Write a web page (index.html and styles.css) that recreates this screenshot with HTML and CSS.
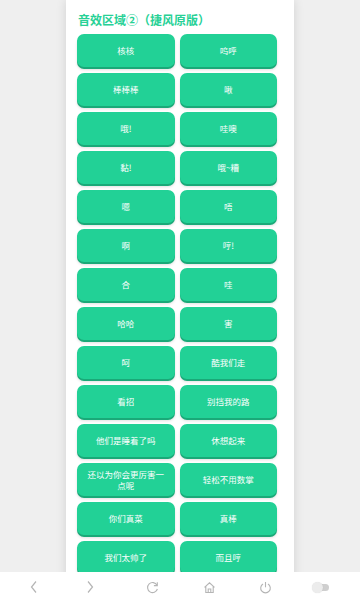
FILE: index.html
```html
<!DOCTYPE html>
<html lang="zh">
<head>
<meta charset="utf-8">
<link rel="stylesheet" href="styles.css">
</head>
<body>
<div class="page">
  <div class="card">
    <h2 class="title">音效区域②（捷风原版）</h2>
    <div class="grid">
      <div class="btn">核核</div><div class="btn">呜呼</div>
      <div class="btn">棒棒棒</div><div class="btn">啾</div>
      <div class="btn">哦!</div><div class="btn">哇噢</div>
      <div class="btn">黏!</div><div class="btn">哦~糟</div>
      <div class="btn">嗯</div><div class="btn">唔</div>
      <div class="btn">啊</div><div class="btn">哼!</div>
      <div class="btn">合</div><div class="btn">哇</div>
      <div class="btn">哈哈</div><div class="btn">害</div>
      <div class="btn">呵</div><div class="btn">酷我们走</div>
      <div class="btn">看招</div><div class="btn">别挡我的路</div>
      <div class="btn">他们是睡着了吗</div><div class="btn">休想起来</div>
      <div class="btn">还以为你会更厉害一点呢</div><div class="btn">轻松不用数掌</div>
      <div class="btn">你们真菜</div><div class="btn">真棒</div>
      <div class="btn">我们太帅了</div><div class="btn">而且哼</div>
    </div>
  </div>
</div>
<nav class="navbar">
  <div class="nav-item nav-back"><svg width="10" height="14" viewBox="0 0 10 14"><path d="M7 1.5 L2.5 7 L7 12.5" fill="none" stroke="#b5b5b5" stroke-width="1.2"/></svg></div>
  <div class="nav-item nav-fwd"><svg width="10" height="14" viewBox="0 0 10 14"><path d="M3 1.5 L7.5 7 L3 12.5" fill="none" stroke="#b5b5b5" stroke-width="1.2"/></svg></div>
  <div class="nav-item"><svg width="13" height="13" viewBox="0 0 13 13"><path d="M11 4.2 A5 5 0 1 0 11.4 8" fill="none" stroke="#b5b5b5" stroke-width="1.1"/><path d="M11.3 1.2 L11.3 4.6 L7.9 4.6" fill="none" stroke="#b5b5b5" stroke-width="1.1"/></svg></div>
  <div class="nav-item"><svg width="13" height="13" viewBox="0 0 13 13"><path d="M1.5 6.3 L6.5 1.8 L11.5 6.3 M2.8 5.3 V11.5 H10.2 V5.3 M5.2 11.5 V8 H7.8 V11.5" fill="none" stroke="#b5b5b5" stroke-width="1.1"/></svg></div>
  <div class="nav-item"><svg width="13" height="13" viewBox="0 0 13 13"><path d="M4 3 A4.8 4.8 0 1 0 9 3" fill="none" stroke="#b5b5b5" stroke-width="1.1"/><path d="M6.5 1 V6.3" fill="none" stroke="#b5b5b5" stroke-width="1.1"/></svg></div>
  <div class="nav-item nav-toggle"><span class="toggle"><span class="knob"></span></span></div>
</nav>
</body>
</html>
```
FILE: styles.css
```css
html, body {
  margin: 0;
  padding: 0;
  width: 360px;
  height: 600px;
  overflow: hidden;
  background: #efefef;
  font-family: "Noto Sans CJK SC", "Noto Sans", sans-serif;
}
.page {
  display: flex;
  justify-content: center;
  height: 600px;
  overflow: hidden;
}
.card {
  width: 228px;
  height: 600px;
  background: #ffffff;
  box-shadow: 0 0 10px rgba(0, 0, 0, 0.12);
  padding: 10px 17px 0 11px;
  box-sizing: border-box;
  overflow: hidden;
}
.title {
  margin: 0 0 5px 1px;
  font-size: 12px;
  line-height: 19px;
  font-weight: 700;
  color: #27d196;
}
.grid {
  display: grid;
  grid-template-columns: 97.5px 97.5px;
  column-gap: 5px;
  row-gap: 6px;
}
.btn {
  height: 33px;
  border-radius: 7px;
  background: #22d196;
  box-shadow: 0 2px 0 #1aa978, 0 3px 3px rgba(0, 0, 0, 0.12);
  color: #ffffff;
  font-size: 8.5px;
  line-height: 11px;
  display: flex;
  align-items: center;
  justify-content: center;
  text-align: center;
  padding: 0 8px;
  box-sizing: border-box;
}
.navbar {
  position: fixed;
  left: 0;
  right: 0;
  bottom: 0;
  height: 28px;
  background: #ffffff;
  display: flex;
  align-items: center;
}
.nav-item {
  flex: 1;
  display: flex;
  align-items: center;
  justify-content: center;
  padding-top: 2px;
}
.nav-back { padding-left: 6px; }
.nav-fwd { padding-right: 6px; }
.nav-toggle { padding-right: 10px; }
.toggle {
  position: relative;
  width: 14px;
  height: 7px;
  border-radius: 4px;
  background: #cfcfcf;
  display: inline-block;
}
.knob {
  position: absolute;
  left: -3px;
  top: -2px;
  width: 11px;
  height: 11px;
  border-radius: 50%;
  background: #ececec;
  box-shadow: 0 0 1px rgba(0,0,0,0.15);
}
```
